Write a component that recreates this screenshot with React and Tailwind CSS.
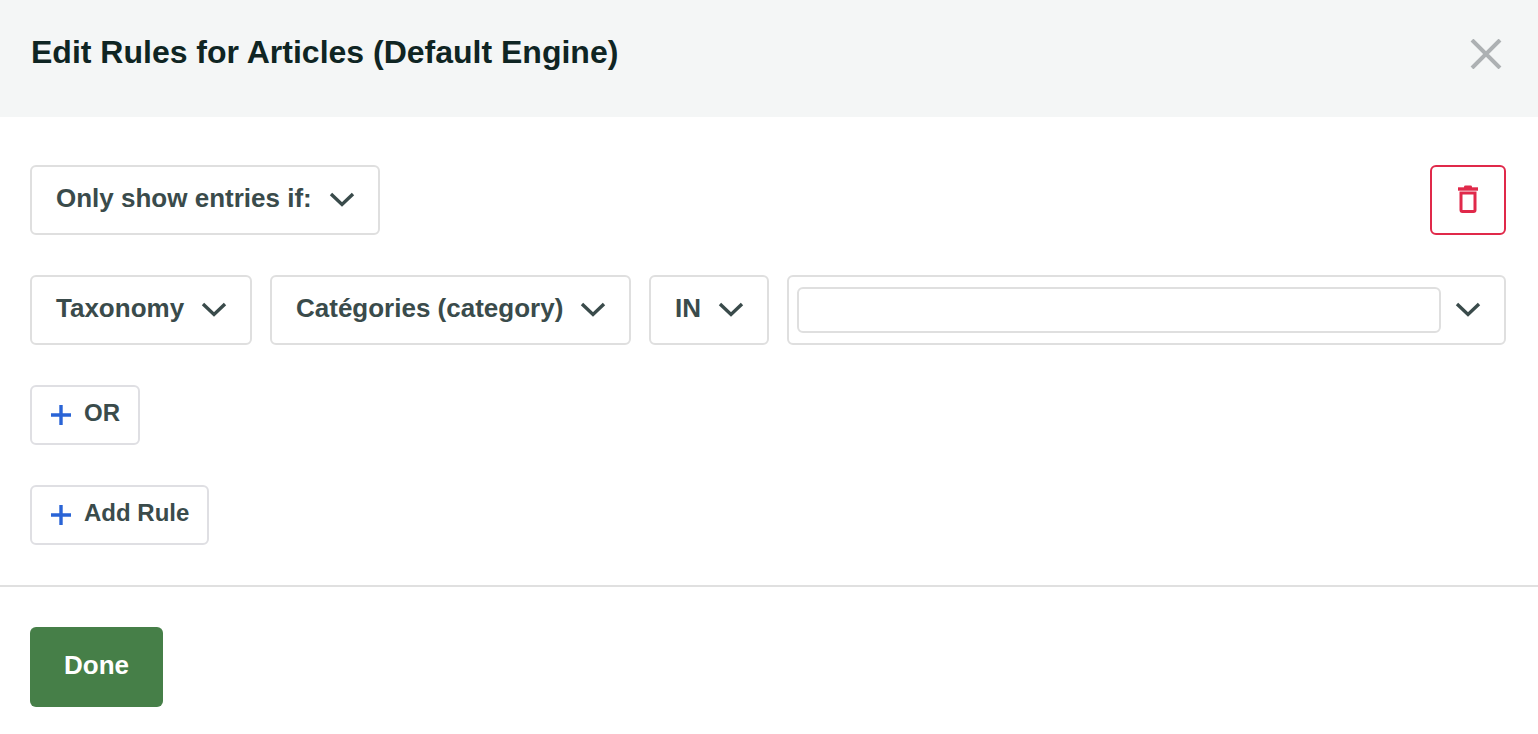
const Chevron = () => (
  <svg viewBox="0 0 26 16" className="w-[26px] h-[16px] shrink-0" fill="none" stroke="#3a4b4b" strokeWidth="3.4">
    <path d="M2 2 L13 12.5 L24 2" />
  </svg>
);

const Plus = () => (
  <svg viewBox="0 0 20 20" className="w-[20px] h-[20px] shrink-0" fill="none" stroke="#2a64d6" strokeWidth="3.4">
    <path d="M10 0 V20 M0 10 H20" />
  </svg>
);

const Select = ({ children, className = "" }) => (
  <div className={`h-[70px] flex items-center gap-[17px] pl-[24px] pr-[24px] border-2 border-[#dfdfdf] rounded-[6px] bg-white text-[26px] font-bold text-[#3a4b4b] whitespace-nowrap ${className}`}>
    <span className="relative -top-[2px]">{children}</span>
    <Chevron />
  </div>
);

const AddButton = ({ children }) => (
  <div className="h-[60px] self-start flex items-center gap-[13px] pl-[19px] pr-[18px] border-2 border-[#dfdfe3] rounded-[6px] bg-white text-[24px] font-bold text-[#3a4b4b] whitespace-nowrap">
    <Plus />
    <span className="relative -top-[2px]">{children}</span>
  </div>
);

export default function App() {
  return (
    <div className="w-[1538px] h-[734px] overflow-hidden bg-white flex flex-col font-['Liberation_Sans',Arial,sans-serif]">
      <header className="h-[117px] shrink-0 bg-[#f4f6f6] flex items-center justify-between pl-[31px] pr-[36px]">
        <h1 className="text-[32px] font-bold text-[#0f2523] relative -top-[7px] whitespace-nowrap">Edit Rules for Articles (Default Engine)</h1>
        <svg viewBox="0 0 32 30" className="w-[32px] h-[30px] relative -top-[5px]" fill="none" stroke="#adb1b3" strokeWidth="4">
          <path d="M2 1 L30 29 M30 1 L2 29" />
        </svg>
      </header>

      <main className="h-[468px] shrink-0 flex flex-col pt-[48px] px-[30px] pr-[32px]">
        <div className="flex justify-between">
          <Select className="w-[350px]">Only show entries if:</Select>
          <div className="w-[76px] h-[70px] flex items-center justify-center pb-[2px] border-2 border-[#e0294a] rounded-[6px] bg-white">
            <svg viewBox="0 0 20 28" className="w-[20px] h-[28px]" fill="none">
              <path d="M0 4 H20" stroke="#e0294a" strokeWidth="3.4" />
              <path d="M6 1.5 Q6 0.5 7.5 0.5 H12.5 Q14 0.5 14 1.5 V3 H6 Z" fill="#e0294a" />
              <path d="M3 8 H17 V25 Q17 26.5 15.5 26.5 H4.5 Q3 26.5 3 25 Z" stroke="#e0294a" strokeWidth="3" />
            </svg>
          </div>
        </div>

        <div className="flex gap-[18px] mt-[40px]">
          <Select className="w-[222px]">Taxonomy</Select>
          <Select className="w-[361px]">Catégories (category)</Select>
          <Select className="w-[120px]">IN</Select>
          <div className="flex-1 h-[70px] flex items-center gap-[14px] pl-[8px] pr-[23px] border-2 border-[#dfdfdf] rounded-[6px] bg-white">
            <div className="flex-1 h-[46px] border-2 border-[#dfdfdf] rounded-[6px]" />
            <Chevron />
          </div>
        </div>

        <div className="mt-[40px] flex flex-col gap-[40px]">
          <AddButton>OR</AddButton>
          <AddButton>Add Rule</AddButton>
        </div>
      </main>

      <div className="h-[2px] shrink-0 bg-[#e0e0e0]" />

      <footer className="pt-[40px] pl-[30px]">
        <div className="w-[133px] h-[80px] flex items-center justify-center rounded-[6px] bg-[#467f48] text-white text-[26px] font-bold">
          <span className="relative -top-[2px]">Done</span>
        </div>
      </footer>
    </div>
  );
}
